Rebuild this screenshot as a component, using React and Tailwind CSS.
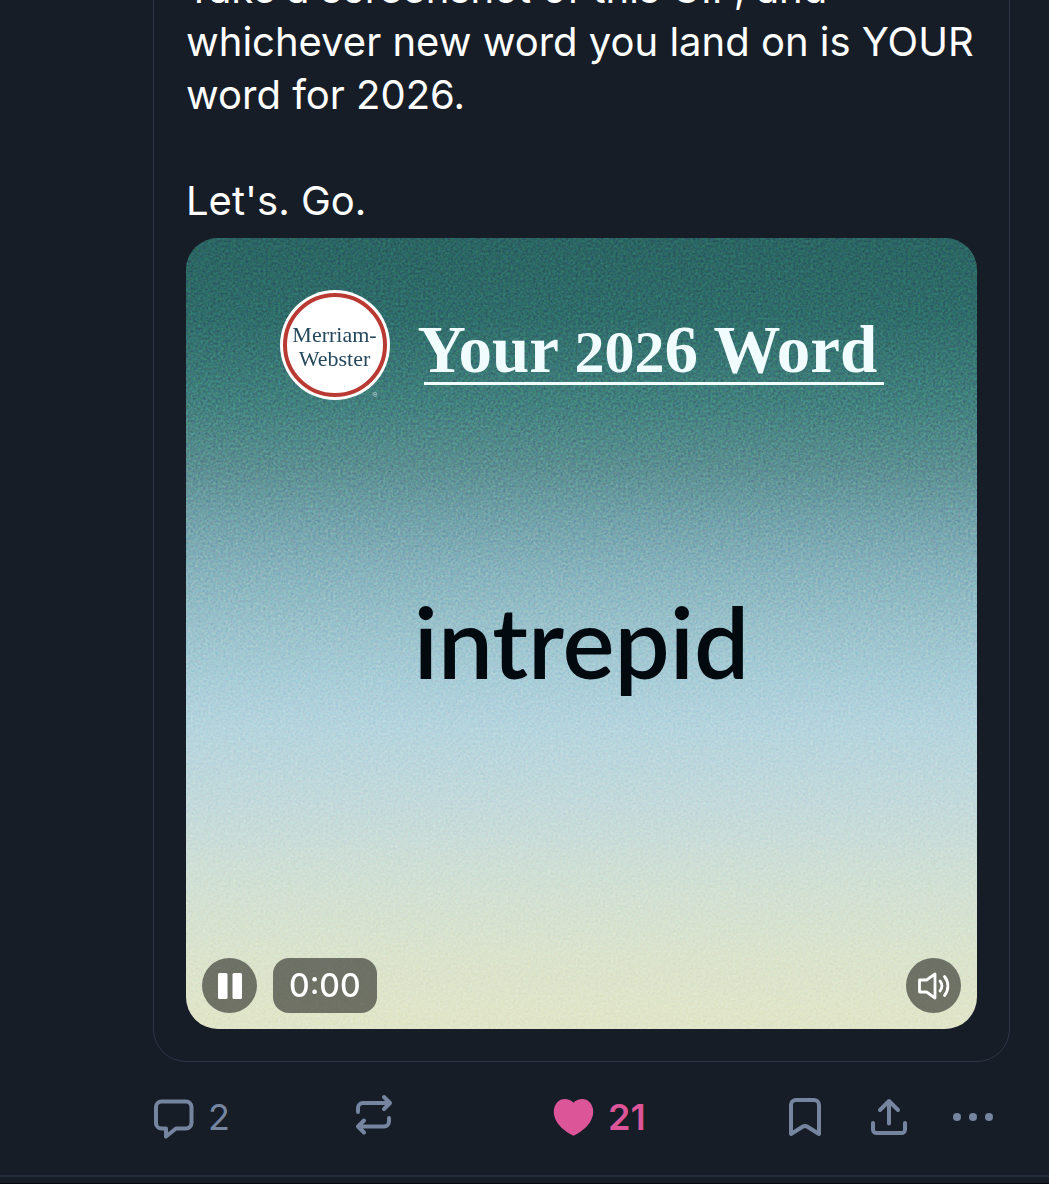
const ReplyIcon = () => (
  <svg viewBox="0 0 48 48" className="size-12" fill="none" stroke="currentColor" strokeWidth="4" strokeLinejoin="round">
    <path d="M11.5 8.5H36a5.5 5.5 0 0 1 5.5 5.5v16a5.5 5.5 0 0 1-5.5 5.5H26l-10 8v-8h-4.5A5.5 5.5 0 0 1 6 30V14a5.5 5.5 0 0 1 5.5-5.5Z" />
  </svg>
);

const RepostIcon = () => (
  <svg viewBox="0 0 48 48" className="size-12" fill="none" stroke="currentColor" strokeWidth="4" strokeLinecap="round" strokeLinejoin="round">
    <path d="M8 19v-4a5 5 0 0 1 5-5h27M34 4l6 6-6 6" />
    <path d="M39 25v3.5a5 5 0 0 1-5 5H8M14 27.5l-6 6 6 6" />
  </svg>
);

const HeartIcon = () => (
  <svg viewBox="0 0 48 48" className="size-12" fill="currentColor">
    <path d="M23.5 9.7C28 5 36 4.8 40 9.5c4.5 5.5 4.3 13.5-.5 20.5-3.5 5-9.5 9.7-16 12.7C17 39.7 11 35 7.5 30 2.7 23 2.5 15 7 9.5c4-4.7 12-4.5 16.5.2Z" />
  </svg>
);

const BookmarkIcon = () => (
  <svg viewBox="0 0 48 48" className="size-12" fill="none" stroke="currentColor" strokeWidth="4" strokeLinejoin="round">
    <path d="M15 7h18a5 5 0 0 1 5 5v29l-11.5-7.2a5 5 0 0 0-5 0L10 41V12a5 5 0 0 1 5-5Z" />
  </svg>
);

const ShareIcon = () => (
  <svg viewBox="0 0 48 48" className="size-12" fill="none" stroke="currentColor" strokeWidth="4" strokeLinecap="round" strokeLinejoin="round">
    <path d="M8 30v6.5a3.5 3.5 0 0 0 3.5 3.5h25a3.5 3.5 0 0 0 3.5-3.5V30" />
    <path d="M24 8v22.5M15 17l9-9 9 9" />
  </svg>
);

const MoreIcon = () => (
  <svg viewBox="0 0 48 48" className="size-12" fill="currentColor">
    <circle cx="8" cy="24" r="4" />
    <circle cx="24" cy="24" r="4" />
    <circle cx="40" cy="24" r="4" />
  </svg>
);

const PauseIcon = () => (
  <svg viewBox="0 0 55 55" className="size-full" fill="currentColor">
    <rect x="16" y="15" width="9.5" height="26" rx="1.5" />
    <rect x="30.5" y="15" width="9.5" height="26" rx="1.5" />
  </svg>
);

const VolumeIcon = () => (
  <svg viewBox="0 0 55 55" className="size-full" fill="none" stroke="currentColor" strokeWidth="2.8" strokeLinecap="round" strokeLinejoin="round">
    <path d="M13.5 22h7l8.5-6v24l-8.5-6h-7Z" />
    <path d="M34 23a7.5 7.5 0 0 1 0 10M38.500 18.500a15 15 0 0 1 0 19" />
  </svg>
);

// Film grain laid over the video gradient
const Grain = () => (
  <svg className="absolute inset-0 size-full opacity-20 mix-blend-overlay" aria-hidden="true">
    <filter id="grain" colorInterpolationFilters="sRGB">
      <feTurbulence type="fractalNoise" baseFrequency="0.4" numOctaves="3" />
      <feColorMatrix type="saturate" values="0.5" />
      <feComponentTransfer>
        <feFuncR type="linear" slope="1.8" intercept="-0.4" />
        <feFuncG type="linear" slope="1.8" intercept="-0.4" />
        <feFuncB type="linear" slope="1.8" intercept="-0.4" />
        <feFuncA type="linear" slope="0" intercept="1" />
      </feComponentTransfer>
    </filter>
    <rect width="100%" height="100%" filter="url(#grain)" />
  </svg>
);

const Logo = () => (
  <div className="relative flex size-[110px] shrink-0 items-center justify-center rounded-full bg-white p-[3px]">
    <div className="flex size-full items-center justify-center rounded-full border-4 border-[#b93a32] pt-1">
      <p className="text-center font-['Liberation_Serif',serif] text-[22px] leading-6 text-[#26485c]">
        Merriam-
        <br />
        Webster
      </p>
    </div>
    <span className="absolute right-3 bottom-0 text-[8px] leading-[10px] text-[#b5d0cf]">®</span>
  </div>
);

const Video = () => (
  <div className="relative isolate mt-[11px] flex aspect-square w-full flex-col overflow-hidden rounded-[32px] bg-[linear-gradient(180deg,#2a6462_0%,#2f6c6a_10%,#42807e_21%,#5b8f91_29%,#70a0a8_35%,#86b2bc_42%,#99c1cb_49%,#a9cdd8_56%,#b5d4dd_62%,#c2d9db_71%,#cfdfd5_80%,#dae3cd_90%,#e1e5c8_100%)]">
    <Grain />
    <div className="relative flex items-start justify-center gap-7 pt-[52px]">
      <Logo />
      <div className="w-[466px] pt-7">
        <h2 className="font-['Liberation_Serif',serif] text-[67px] leading-[62px] font-bold whitespace-nowrap text-[#f0fcfd]">
          Your <span className="text-[60px] leading-none">202</span>6 Word
        </h2>
        <div className="ml-1.5 h-[3px] bg-[#f0fcfd]" />
      </div>
    </div>
    <p className="relative flex flex-1 items-center justify-center pb-[60px] font-['Lato',sans-serif] text-[98px] leading-[110px] font-semibold text-[#020a10]">
      intrepid
    </p>
    <div className="relative flex items-center gap-4 p-4 text-white">
      <button aria-label="Pause" className="size-[55px] rounded-full bg-black/50">
        <PauseIcon />
      </button>
      <span className="rounded-2xl bg-black/50 px-4 text-[32px] leading-[55px] font-medium">0:00</span>
      <button aria-label="Mute" className="ml-auto size-[55px] rounded-full bg-black/50">
        <VolumeIcon />
      </button>
    </div>
  </div>
);

const App = () => {
  return (
    <main className="overflow-hidden border-b border-[#05080c] bg-[#161d27] pb-1.5 font-['Inter',sans-serif]">
      <article className="border-b-2 border-[#232c3b] pb-[34px]">
        <div className="mr-[39px] ml-[153px] -mt-[71px] rounded-[33px] border border-[#2c3646] p-8">
          <p className="text-[40px] leading-[53px] text-white">
            Take a screenshot of this GIF, and whichever new word you land on is YOUR word for 2026.
            <br />
            <br />
            Let's. Go.
          </p>
          <Video />
        </div>

        <div className="mt-[31px] mr-[52px] ml-[150px] flex items-center justify-between text-[36px] leading-12 text-[#7585a0]">
          <div className="flex">
            <div className="w-[200px]">
              <button aria-label="Reply" className="flex items-center gap-2.5">
                <ReplyIcon />2
              </button>
            </div>
            <div className="w-[200px]">
              <button aria-label="Repost" className="flex items-center">
                <RepostIcon />
              </button>
            </div>
            <button aria-label="Unlike" className="flex items-center gap-2.5 font-semibold text-[#db5598]">
              <HeartIcon />21
            </button>
          </div>
          <div className="flex gap-9">
            <button aria-label="Save"><BookmarkIcon /></button>
            <button aria-label="Share"><ShareIcon /></button>
            <button aria-label="More options"><MoreIcon /></button>
          </div>
        </div>
      </article>
    </main>
  );
};

export default App;
